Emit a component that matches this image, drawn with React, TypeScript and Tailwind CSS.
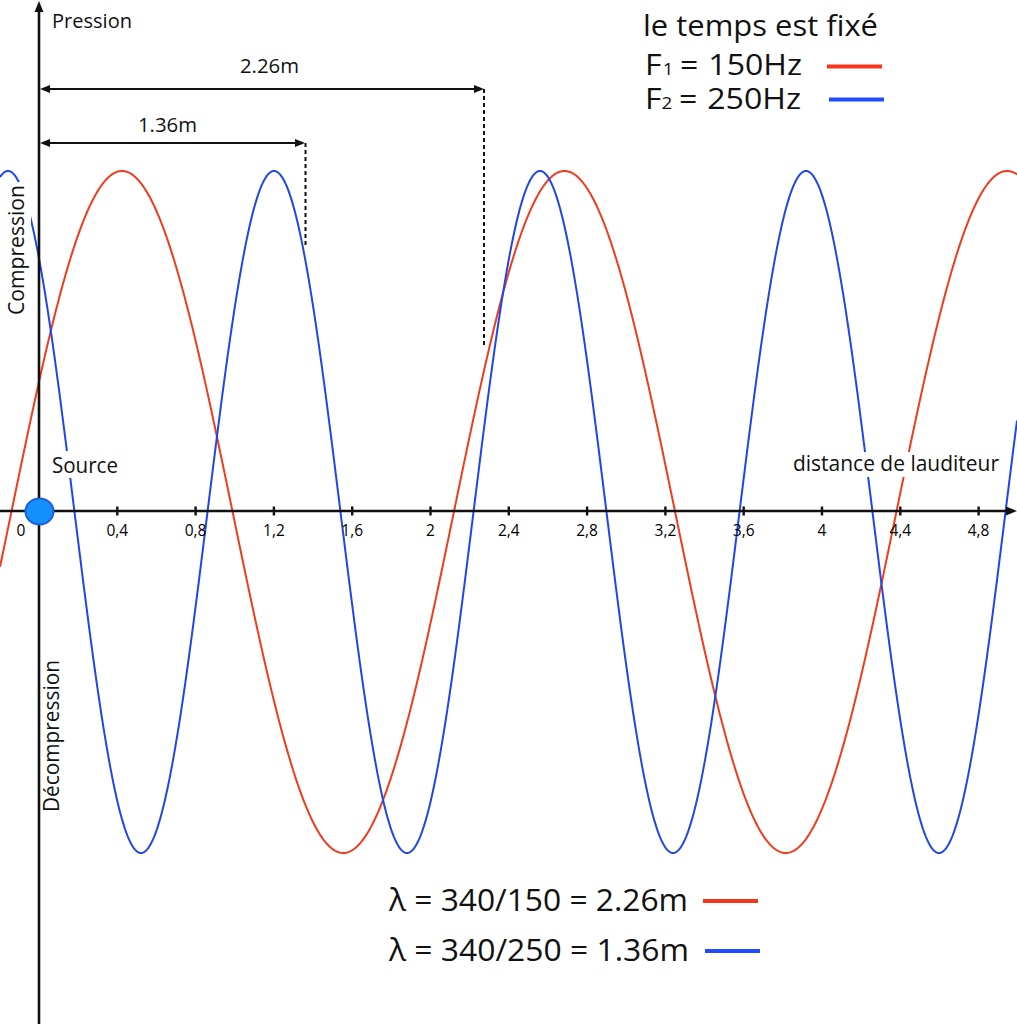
import React from "react";

const RED = "#f03c1e";
const BLUE = "#2146e6";

function wavePath(peak: number, period: number) {
  let d = "";
  for (let x = 0; x <= 1017; x += 1) {
    const y = 512 - 341 * Math.cos((2 * Math.PI * (x - peak)) / period);
    d += (x === 0 ? "M" : "L") + x + " " + y.toFixed(2) + " ";
  }
  return d;
}

const ticks = ["0,4", "0,8", "1,2", "1,6", "2", "2,4", "2,8", "3,2", "3,6", "4", "4,4", "4,8"];

export default function App() {
  const red = wavePath(122, 442.5);
  const blue = wavePath(274, 266);
  return (
    <div className="w-[1017px] h-[1024px] bg-white overflow-hidden font-['Open_Sans','Noto_Sans',sans-serif]">
      <svg width="1017" height="1024" viewBox="0 0 1017 1024" fill="#111" className="block">
        {/* waves */}
        <path d={red} fill="none" stroke={RED} strokeWidth="2" />
        <path d={blue} fill="none" stroke={BLUE} strokeWidth="2" />

        {/* label backgrounds that cut the waves */}
        <rect x="7" y="182" width="24" height="136" fill="white" />
        <rect x="50" y="451" width="70" height="27" fill="white" />
        <rect x="790" y="452" width="211" height="25" fill="white" />

        {/* axes */}
        <line x1="39" y1="8" x2="39" y2="1024" stroke="#111" strokeWidth="2.6" />
        <polygon points="39,1 34.5,12 43.5,12" fill="#111" />
        <line x1="0" y1="511" x2="1008" y2="511" stroke="#111" strokeWidth="2.6" />
        <polygon points="1017,511 1006,506.5 1006,515.5" fill="#111" />

        {/* ticks */}
        {ticks.map((t, i) => {
          const x = 39 + 78.3 * (i + 1);
          return (
            <g key={t}>
              <line x1={x} y1="506.5" x2={x} y2="515.5" stroke="#111" strokeWidth="2.4" />
              <text x={x} y="535.5" fontSize="15.5" textAnchor="middle" fill="#000">
                {t}
              </text>
            </g>
          );
        })}
        <text x="21" y="535.5" fontSize="15.5" textAnchor="middle" fill="#000">0</text>

        {/* source */}
        <ellipse cx="39.5" cy="511.5" rx="14" ry="13" fill="#1590ff" stroke="#1c5ed8" strokeWidth="2" />

        {/* dimension arrows */}
        <line x1="45" y1="89" x2="477" y2="89" stroke="#111" strokeWidth="2" />
        <polygon points="40,89 50,85 50,93" fill="#111" />
        <polygon points="484,89 474,85 474,93" fill="#111" />
        <line x1="484" y1="89" x2="484" y2="348" stroke="#111" strokeWidth="2" strokeDasharray="4 3" />

        <line x1="45" y1="143" x2="298" y2="143" stroke="#111" strokeWidth="2" />
        <polygon points="40,143 50,139 50,147" fill="#111" />
        <polygon points="305,143 295,139 295,147" fill="#111" />
        <line x1="305.5" y1="143" x2="305.5" y2="245" stroke="#111" strokeWidth="2" strokeDasharray="4 3" />

        <text x="240" y="73" fontSize="20" textLength="59" lengthAdjust="spacingAndGlyphs">2.26m</text>
        <text x="138" y="132" fontSize="20" textLength="59" lengthAdjust="spacingAndGlyphs">1.36m</text>

        {/* axis labels */}
        <text x="52" y="28" fontSize="20" textLength="80" lengthAdjust="spacingAndGlyphs">Pression</text>
        <text x="52" y="473" fontSize="21" textLength="66" lengthAdjust="spacingAndGlyphs">Source</text>
        <text x="793" y="471" fontSize="21" textLength="206" lengthAdjust="spacingAndGlyphs">distance de lauditeur</text>
        <text transform="translate(24 250) rotate(-90)" fontSize="21" textAnchor="middle" textLength="130" lengthAdjust="spacingAndGlyphs">
          Compression
        </text>
        <text transform="translate(59 736) rotate(-90)" fontSize="21" textAnchor="middle" textLength="152" lengthAdjust="spacingAndGlyphs">
          Décompression
        </text>

        {/* top legend */}
        <text x="643" y="36" fontSize="30" textLength="235" lengthAdjust="spacingAndGlyphs">le temps est fixé</text>
        <text x="645" y="75" fontSize="29" textLength="157" lengthAdjust="spacingAndGlyphs">
          F<tspan fontSize="17" dx="1">1</tspan><tspan dx="6">=</tspan><tspan dx="9">150Hz</tspan>
        </text>
        <line x1="827" y1="66.5" x2="882" y2="66.5" stroke="#f5361a" strokeWidth="4" />

        <text x="645" y="109" fontSize="29" textLength="156" lengthAdjust="spacingAndGlyphs">
          F<tspan fontSize="17" dx="0">2</tspan><tspan dx="6">=</tspan><tspan dx="9">250Hz</tspan>
        </text>
        <line x1="829" y1="99.5" x2="884" y2="99.5" stroke="#1f4cff" strokeWidth="4" />

        {/* bottom legend */}
        <text x="389" y="911" fontSize="31" textLength="299" lengthAdjust="spacingAndGlyphs">λ = 340/150 = 2.26m</text>
        <line x1="703" y1="901" x2="758" y2="901" stroke="#f5361a" strokeWidth="4" />
        <text x="389" y="961" fontSize="31" textLength="300" lengthAdjust="spacingAndGlyphs">λ = 340/250 = 1.36m</text>
        <line x1="705" y1="951" x2="760" y2="951" stroke="#1f4cff" strokeWidth="4" />
      </svg>
    </div>
  );
}
